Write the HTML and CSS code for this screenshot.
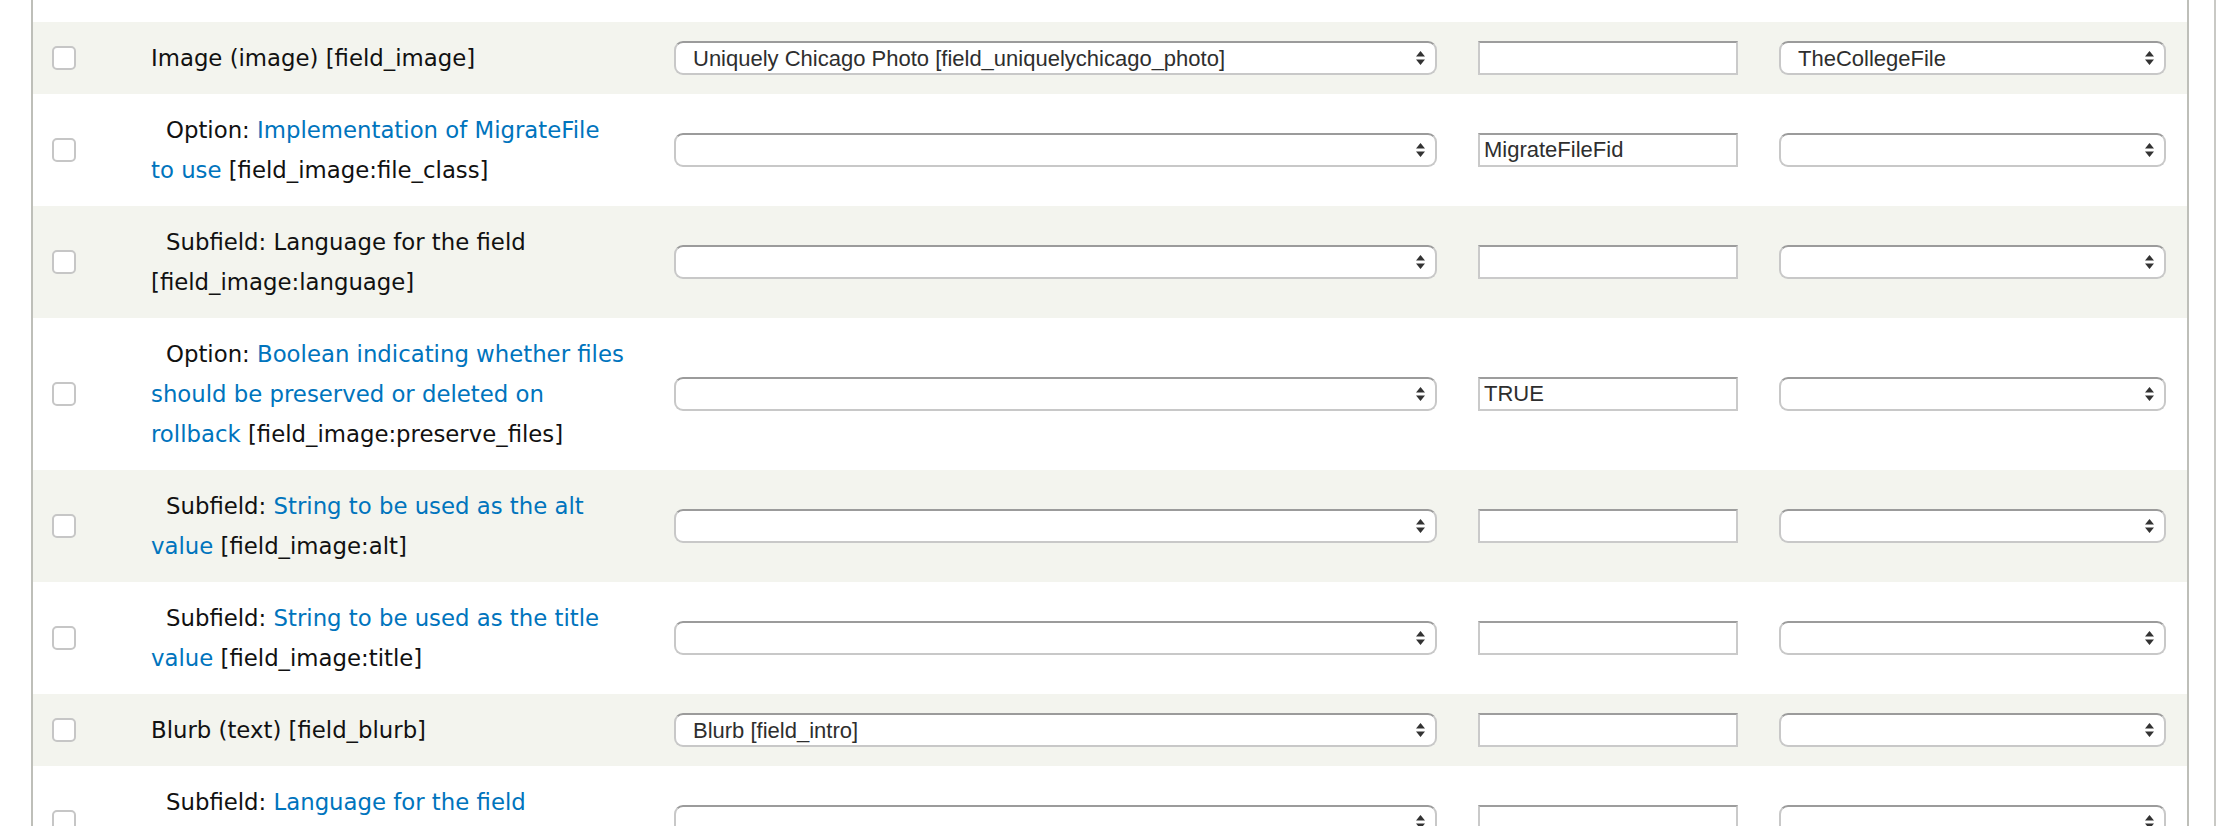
FILE: index.html
```html
<!DOCTYPE html>
<html>
<head>
<meta charset="utf-8">
<title>Field mappings</title>
<link rel="stylesheet" href="styles.css">
</head>
<body>
<div class="frame">
  <div class="table">
    <div class="row even">
      <input type="checkbox" class="check">
      <div class="label">Image (image) [field_image]</div>
      <div class="select wide"><select><option>Uniquely Chicago Photo [field_uniquelychicago_photo]</option></select><svg class="arrows" viewBox="0 0 9 14"><path d="M4.5 0 L9 5.5 L0 5.5 Z M0 8.5 L9 8.5 L4.5 14 Z"/></svg></div>
      <input type="text" class="text" value="">
      <div class="select narrow"><select><option>TheCollegeFile</option></select><svg class="arrows" viewBox="0 0 9 14"><path d="M4.5 0 L9 5.5 L0 5.5 Z M0 8.5 L9 8.5 L4.5 14 Z"/></svg></div>
    </div>
    <div class="row">
      <input type="checkbox" class="check">
      <div class="label sub">Option: <a href="#">Implementation of MigrateFile to use</a> [field_image:file_class]</div>
      <div class="select wide"><select><option></option></select><svg class="arrows" viewBox="0 0 9 14"><path d="M4.5 0 L9 5.5 L0 5.5 Z M0 8.5 L9 8.5 L4.5 14 Z"/></svg></div>
      <input type="text" class="text" value="MigrateFileFid">
      <div class="select narrow"><select><option></option></select><svg class="arrows" viewBox="0 0 9 14"><path d="M4.5 0 L9 5.5 L0 5.5 Z M0 8.5 L9 8.5 L4.5 14 Z"/></svg></div>
    </div>
    <div class="row even">
      <input type="checkbox" class="check">
      <div class="label sub">Subfield: Language for the field [field_image:language]</div>
      <div class="select wide"><select><option></option></select><svg class="arrows" viewBox="0 0 9 14"><path d="M4.5 0 L9 5.5 L0 5.5 Z M0 8.5 L9 8.5 L4.5 14 Z"/></svg></div>
      <input type="text" class="text" value="">
      <div class="select narrow"><select><option></option></select><svg class="arrows" viewBox="0 0 9 14"><path d="M4.5 0 L9 5.5 L0 5.5 Z M0 8.5 L9 8.5 L4.5 14 Z"/></svg></div>
    </div>
    <div class="row">
      <input type="checkbox" class="check">
      <div class="label sub">Option: <a href="#">Boolean indicating whether files should be preserved or deleted on rollback</a> [field_image:preserve_files]</div>
      <div class="select wide"><select><option></option></select><svg class="arrows" viewBox="0 0 9 14"><path d="M4.5 0 L9 5.5 L0 5.5 Z M0 8.5 L9 8.5 L4.5 14 Z"/></svg></div>
      <input type="text" class="text" value="TRUE">
      <div class="select narrow"><select><option></option></select><svg class="arrows" viewBox="0 0 9 14"><path d="M4.5 0 L9 5.5 L0 5.5 Z M0 8.5 L9 8.5 L4.5 14 Z"/></svg></div>
    </div>
    <div class="row even">
      <input type="checkbox" class="check">
      <div class="label sub">Subfield: <a href="#">String to be used as the alt value</a> [field_image:alt]</div>
      <div class="select wide"><select><option></option></select><svg class="arrows" viewBox="0 0 9 14"><path d="M4.5 0 L9 5.5 L0 5.5 Z M0 8.5 L9 8.5 L4.5 14 Z"/></svg></div>
      <input type="text" class="text" value="">
      <div class="select narrow"><select><option></option></select><svg class="arrows" viewBox="0 0 9 14"><path d="M4.5 0 L9 5.5 L0 5.5 Z M0 8.5 L9 8.5 L4.5 14 Z"/></svg></div>
    </div>
    <div class="row">
      <input type="checkbox" class="check">
      <div class="label sub">Subfield: <a href="#">String to be used as the title value</a> [field_image:title]</div>
      <div class="select wide"><select><option></option></select><svg class="arrows" viewBox="0 0 9 14"><path d="M4.5 0 L9 5.5 L0 5.5 Z M0 8.5 L9 8.5 L4.5 14 Z"/></svg></div>
      <input type="text" class="text" value="">
      <div class="select narrow"><select><option></option></select><svg class="arrows" viewBox="0 0 9 14"><path d="M4.5 0 L9 5.5 L0 5.5 Z M0 8.5 L9 8.5 L4.5 14 Z"/></svg></div>
    </div>
    <div class="row even">
      <input type="checkbox" class="check">
      <div class="label">Blurb (text) [field_blurb]</div>
      <div class="select wide"><select><option>Blurb [field_intro]</option></select><svg class="arrows" viewBox="0 0 9 14"><path d="M4.5 0 L9 5.5 L0 5.5 Z M0 8.5 L9 8.5 L4.5 14 Z"/></svg></div>
      <input type="text" class="text" value="">
      <div class="select narrow"><select><option></option></select><svg class="arrows" viewBox="0 0 9 14"><path d="M4.5 0 L9 5.5 L0 5.5 Z M0 8.5 L9 8.5 L4.5 14 Z"/></svg></div>
    </div>
    <div class="row">
      <input type="checkbox" class="check">
      <div class="label sub">Subfield: <a href="#">Language for the field</a> [field_blurb:language]</div>
      <div class="select wide"><select><option></option></select><svg class="arrows" viewBox="0 0 9 14"><path d="M4.5 0 L9 5.5 L0 5.5 Z M0 8.5 L9 8.5 L4.5 14 Z"/></svg></div>
      <input type="text" class="text" value="">
      <div class="select narrow"><select><option></option></select><svg class="arrows" viewBox="0 0 9 14"><path d="M4.5 0 L9 5.5 L0 5.5 Z M0 8.5 L9 8.5 L4.5 14 Z"/></svg></div>
    </div>
  </div>
</div>
</body>
</html>
```
FILE: styles.css
```css
html, body {
  margin: 0;
  padding: 0;
  background: #fff;
}
body {
  font-family: "DejaVu Sans", "Noto Sans", sans-serif;
  color: #111;
}
.frame {
  margin-left: 31px;
  width: 2185px;
  border-right: 2px solid #c9c9c5;
  box-sizing: border-box;
}
.table {
  width: 2158px;
  box-sizing: border-box;
  border-left: 2px solid #bebfb9;
  border-right: 2px solid #bebfb9;
  padding-top: 22px;
}
.row {
  display: flex;
  align-items: center;
  padding: 16px 21px 16px 19px;
  background: #fff;
}
.row.even {
  background: #f3f4ee;
}
.check {
  -webkit-appearance: none;
  appearance: none;
  flex: 0 0 auto;
  width: 24px;
  height: 24px;
  margin: 0;
  box-sizing: border-box;
  border: 2px solid #c6c6c6;
  border-radius: 5px;
  background: #fff;
}
.label {
  flex: 0 0 auto;
  margin-left: 75px;
  margin-right: 13px;
  width: 476px;
  font-size: 22.8px;
  line-height: 40px;
  color: #111;
}
.label.sub {
  text-indent: 15px;
}
.label a {
  color: #0074bd;
  text-decoration: none;
}
.select {
  flex: 0 0 auto;
  display: grid;
  align-items: center;
  height: 34px;
}
.select.wide {
  margin-left: 34px;
  width: 763px;
}
.select.narrow {
  margin-left: 41px;
  width: 387px;
}
.select select,
.select .arrows {
  grid-area: 1 / 1;
}
.select select {
  -webkit-appearance: none;
  appearance: none;
  width: 100%;
  height: 34px;
  margin: 0;
  box-sizing: border-box;
  border: 2px solid #c8c8c8;
  border-top-color: #9b9b9b;
  border-radius: 9px;
  background: #fff;
  font-family: "Liberation Sans", Arial, sans-serif;
  font-size: 22px;
  color: #2e2e2e;
  padding: 0 40px 0 17px;
  outline: none;
}
.select .arrows {
  justify-self: end;
  margin-right: 12px;
  width: 9px;
  height: 14px;
  fill: #333;
  pointer-events: none;
}
.text {
  flex: 0 0 auto;
  margin: 0 0 0 41px;
  width: 260px;
  height: 34px;
  box-sizing: border-box;
  border: 2px solid #cacaca;
  border-top-color: #9d9d9d;
  border-radius: 0;
  padding: 0 4px;
  font-family: "Liberation Sans", Arial, sans-serif;
  font-size: 22px;
  color: #2e2e2e;
  background: #fff;
  outline: none;
}
```
